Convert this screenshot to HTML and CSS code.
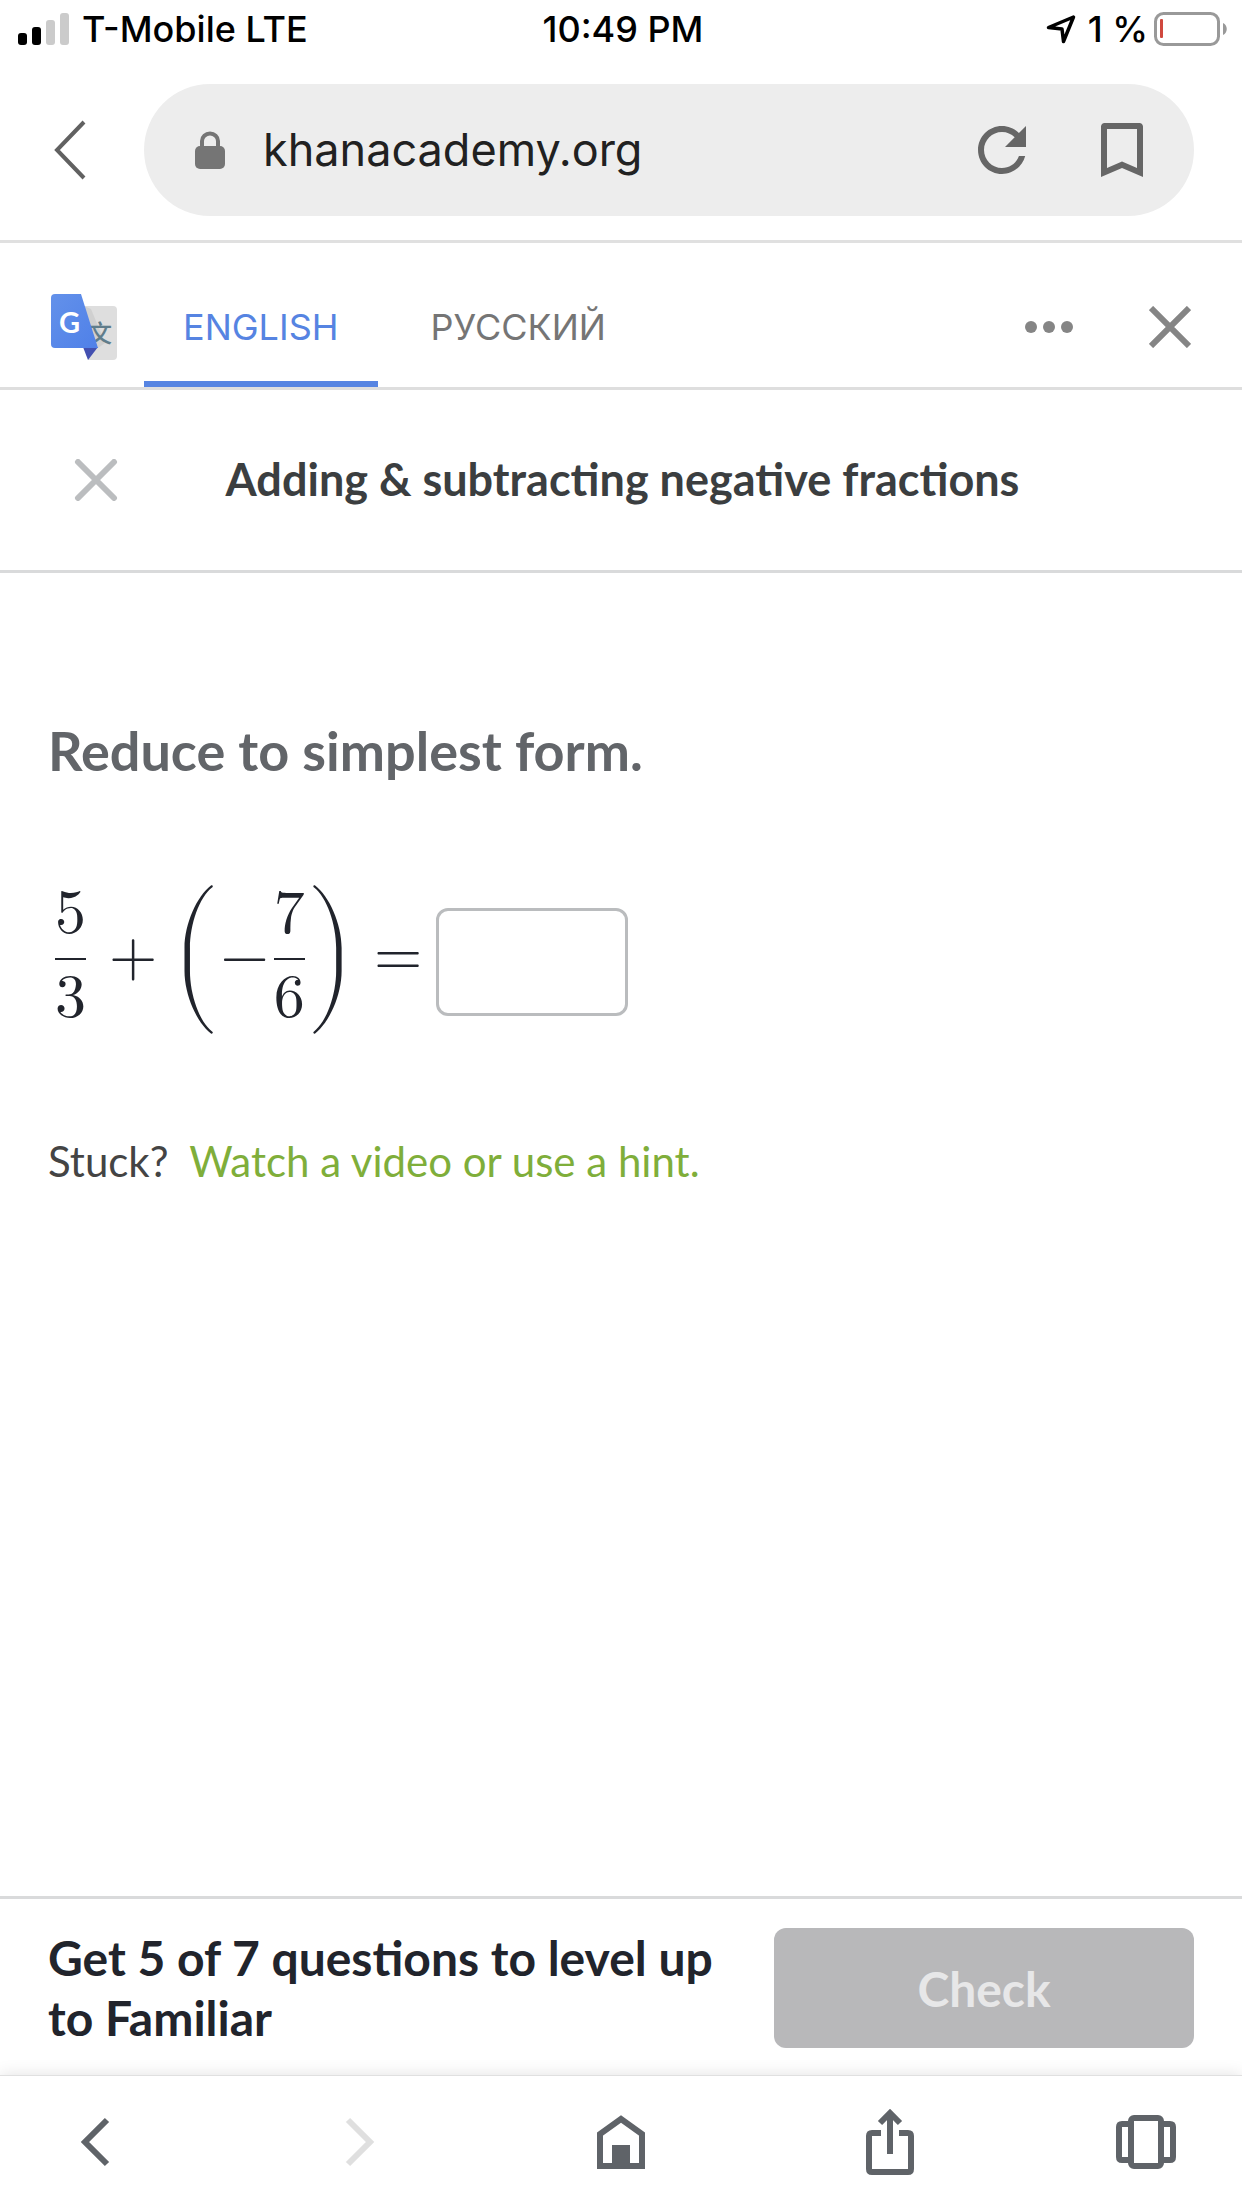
FILE: index.html
```
<!DOCTYPE html>
<html lang="en">
<head>
    <meta charset="UTF-8">
    <meta name="viewport" content="width=device-width, initial-scale=1.0">
    <title>Adding &amp; subtracting negative fractions</title>
    <link rel="stylesheet" href="styles.css">
</head>
<body>
    <div class="status-bar">
        <div class="status-left">
            <svg class="signal" width="52" height="34" viewBox="0 0 52 34">
                <rect x="0" y="21" width="9" height="12" rx="3" fill="#000"/>
                <rect x="14" y="15" width="9" height="18" rx="3" fill="#000"/>
                <rect x="28" y="8" width="9" height="25" rx="3" fill="#cbcbcb"/>
                <rect x="42" y="1" width="9" height="32" rx="3" fill="#cbcbcb"/>
            </svg>
            <span>T-Mobile LTE</span>
        </div>
        <div class="status-time">10:49 PM</div>
        <div class="status-right">
            <svg width="30" height="30" viewBox="0 0 30 30">
                <path d="M27.500 3L2.500 13.500l13.500 1.500L17.500 27.500z" fill="none" stroke="#000" stroke-width="3.500" stroke-linejoin="round"/>
            </svg>
            <span class="percent">1 %</span>
            <svg width="74" height="34" viewBox="0 0 74 34">
                <rect x="1.500" y="1.500" width="63" height="31" rx="8" fill="none" stroke="#999" stroke-width="3"/>
                <rect x="6" y="7" width="3" height="19" rx="1" fill="#d0483e"/>
                <path d="M69 11c5 2 5 10 0 12z" fill="#999"/>
            </svg>
        </div>
    </div>

    <div class="url-row">
        <button class="icon-button back" aria-label="Back">
            <svg width="34" height="60" viewBox="0 0 34 60">
                <path d="M30 2L3 30l27 28" fill="none" stroke="#616161" stroke-width="4"/>
            </svg>
        </button>
        <div class="url-bar">
            <svg width="30" height="38" viewBox="0 0 30 38">
                <rect x="0" y="15" width="30" height="23" rx="5" fill="#757575"/>
                <path d="M7 17v-7a8 7.500 0 0 1 16 0v7" fill="none" stroke="#757575" stroke-width="4"/>
            </svg>
            <input class="url" type="text" value="khanacademy.org" aria-label="Address">
            <button class="icon-button" aria-label="Reload">
                <svg width="72" height="72" viewBox="0 0 24 24" fill="#666">
                    <path d="M17.650 6.350C16.200 4.900 14.210 4 12 4c-4.420 0-7.990 3.580-7.990 8s3.570 8 7.990 8c3.730 0 6.840-2.550 7.730-6h-2.080c-.82 2.330-3.040 4-5.650 4-3.310 0-6-2.690-6-6s2.690-6 6-6c1.660 0 3.140.69 4.220 1.780L13 11h7V4l-2.350 2.350z"/>
                </svg>
            </button>
            <button class="icon-button" aria-label="Bookmark">
                <svg width="72" height="72" viewBox="0 0 24 24" fill="#666">
                    <path d="M17.800 3H6.200C5.500 3 5 3.500 5 4.200V21l7-3 7 3V4.200C19 3.500 18.500 3 17.800 3zM17 18l-5-2.180L7 18V5h10v13z"/>
                </svg>
            </button>
        </div>
    </div>

    <div class="translate-bar">
        <svg width="66" height="66" viewBox="0 0 66 66">
            <defs>
                <linearGradient id="blue" x1="0" y1="0" x2="1" y2="1">
                    <stop offset="0" stop-color="#6391ea"/>
                    <stop offset="1" stop-color="#4f80e8"/>
                </linearGradient>
            </defs>
            <path d="M30 12h32q4 0 4 4v46q0 4-4 4H37z" fill="#dedede"/>
            <path d="M33 12l7 3 14 34-7 5z" fill="#d0d0d0"/>
            <text class="logo-zh" x="37" y="48">文</text>
            <path d="M32 53h15L37 66z" fill="#4350b0"/>
            <path d="M4 0h26l17 54H4q-4 0-4-4V4q0-4 4-4z" fill="url(#blue)"/>
            <text class="logo-g" x="8" y="39">G</text>
        </svg>
        <div class="tabs">
            <button class="tab active">ENGLISH</button>
            <button class="tab">РУССКИЙ</button>
        </div>
        <button class="icon-button more" aria-label="More options">
            <svg width="48" height="12" viewBox="0 0 48 12" fill="#858585">
                <circle cx="6" cy="6" r="6"/>
                <circle cx="24" cy="6" r="6"/>
                <circle cx="42" cy="6" r="6"/>
            </svg>
        </button>
        <button class="icon-button" aria-label="Close translation">
            <svg width="42" height="42" viewBox="0 0 42 42">
                <path d="M2 2l38 38M40 2L2 40" stroke="#858585" stroke-width="6"/>
            </svg>
        </button>
    </div>

    <div class="lesson-header">
        <button class="icon-button" aria-label="Close exercise">
            <svg width="66" height="42" viewBox="0 0 66 42">
                <path d="M15 3l36 36M51 3L15 39" stroke="#bbbdbf" stroke-width="6" stroke-linecap="round"/>
            </svg>
        </button>
        <h1>Adding &amp; subtracting negative fractions</h1>
    </div>

    <main>
        <h2>Reduce to simplest form.</h2>
        <div class="equation">
            <math displaystyle="true">
                <mfrac><mn>5</mn><mn>3</mn></mfrac>
                <mo lspace="22px" rspace="9px">+</mo>
                <mrow>
                    <mo>(</mo>
                    <mo lspace="0px" rspace="4px">−</mo>
                    <mfrac><mn>7</mn><mn>6</mn></mfrac>
                    <mo>)</mo>
                </mrow>
                <mo lspace="14px" rspace="0px">=</mo>
            </math>
            <input class="answer" type="text" aria-label="Your answer">
        </div>
        <p class="stuck">Stuck? <a href="#">Watch a video or use a hint.</a></p>
    </main>

    <div class="task-bar">
        <p>Get 5 of 7 questions to level up to Familiar</p>
        <button class="check" disabled>Check</button>
    </div>

    <nav class="browser-nav">
        <button class="icon-button" aria-label="Back">
            <svg width="60" height="66" viewBox="0 0 60 66">
                <path d="M41 11L19 33l22 22" fill="none" stroke="#5f6368" stroke-width="6"/>
            </svg>
        </button>
        <button class="icon-button" aria-label="Forward" disabled>
            <svg width="60" height="66" viewBox="0 0 60 66">
                <path d="M19 11l22 22-22 22" fill="none" stroke="#dfdfdf" stroke-width="6"/>
            </svg>
        </button>
        <button class="icon-button" aria-label="Home">
            <svg width="60" height="66" viewBox="0 0 60 66">
                <path d="M9 57V25L30 10l21 15v32z" fill="none" stroke="#5f6368" stroke-width="6"/>
                <path d="M21 36h18v22H21z" fill="#5f6368"/>
            </svg>
        </button>
        <button class="icon-button" aria-label="Share">
            <svg width="60" height="66" viewBox="-9 0 60 66">
                <path d="M18 24H9q-3 0-3 3v33q0 3 3 3h36q3 0 3-3V27q0-3-3-3h-9M27 45V5M17 14L27 4l10 10" fill="none" stroke="#5f6368" stroke-width="6"/>
            </svg>
        </button>
        <button class="icon-button" aria-label="Tabs">
            <svg width="60" height="66" viewBox="0 0 60 66" fill="none" stroke="#5f6368" stroke-width="6">
                <rect x="15" y="9" width="30" height="48" rx="3"/>
                <path d="M15 15H6q-3 0-3 3v30q0 3 3 3h9M45 15h9q3 0 3 3v30q0 3-3 3h-9"/>
            </svg>
        </button>
    </nav>
</body>
</html>
```
FILE: styles.css
```
* {
    box-sizing: border-box;
}
body {
    margin: 0;
    min-height: 100vh;
    display: flex;
    flex-direction: column;
    background: #fff;
    font-family: Lato, sans-serif;
    color: #21242c;
}
svg {
    display: block;
    flex: none;
}
h1, h2, p {
    margin: 0;
}
button {
    font-family: inherit;
    border: none;
    background: none;
    padding: 0;
    cursor: pointer;
}
.icon-button {
    flex: none;
}

/* phone status bar */
.status-bar {
    display: grid;
    grid-template-columns: 1fr auto 1fr;
    align-items: center;
    height: 60px;
    padding: 0 14px 2px 18px;
    font: 500 36px/58px Inter, sans-serif;
    color: #000;
}
.status-left, .status-right {
    display: flex;
    align-items: center;
}
.status-left {
    gap: 12px;
}
.status-right {
    justify-content: flex-end;
    gap: 6px;
}
.percent {
    padding-left: 6px;
}

/* address bar */
.url-row {
    display: flex;
    align-items: center;
    gap: 56px;
    padding: 24px 48px 24px 54px;
    border-bottom: 3px solid #e0e0e0;
}
.url-bar {
    flex: 1;
    min-width: 0;
    display: flex;
    align-items: center;
    height: 132px;
    padding: 0 36px 0 51px;
    border-radius: 66px;
    background: #ededed;
}
.url {
    flex: 1;
    min-width: 0;
    margin: 0 38px;
    padding: 0;
    border: none;
    background: none;
    font: 400 45px/60px Inter, sans-serif;
    color: #212121;
}
.url-bar .icon-button + .icon-button {
    margin-left: 48px;
}

/* translate bar */
.translate-bar {
    display: flex;
    align-items: center;
    height: 147px;
    padding: 24px 51px 0;
    border-bottom: 3px solid #dedede;
}
.logo-g {
    font: 700 29px Lato, sans-serif;
    fill: #fff;
}
.logo-zh {
    font: 500 24px "Noto Sans CJK SC", sans-serif;
    fill: #607d8b;
}
.tabs {
    flex: 1;
    align-self: stretch;
    display: flex;
    gap: 14px;
    margin-left: 27px;
}
.tab {
    padding: 6px 39px 0;
    border-bottom: 6px solid transparent;
    font: 400 36px/48px Inter, sans-serif;
    color: #757575;
}
.tab.active {
    border-color: #5684e2;
    color: #5684e2;
}
.more {
    margin-right: 76px;
}

/* lesson header */
.lesson-header {
    display: flex;
    align-items: center;
    height: 183px;
    padding: 0 126px 0 63px;
    border-bottom: 3px solid #d9dadb;
}
h1 {
    flex: 1;
    padding-bottom: 3px;
    text-align: center;
    font-size: 45px;
    line-height: 60px;
    color: #3b3e40;
}

/* exercise */
main {
    flex: 1;
    padding: 142px 48px 48px;
}
h2 {
    font-size: 54px;
    line-height: 72px;
    color: #626569;
}
.equation {
    display: flex;
    align-items: center;
    gap: 14px;
    height: 156px;
    margin-top: 97px;
    padding-left: 6px;
}
.equation math {
    padding-bottom: 6px;
    font-family: "Latin Modern Math", math;
    font-size: 62px;
}
.answer {
    width: 192px;
    height: 108px;
    padding: 0 24px;
    border: 3px solid #babcbe;
    border-radius: 12px;
    font: inherit;
    font-size: 48px;
}
.stuck {
    margin-top: 91px;
    font-size: 42px;
    line-height: 60px;
    color: #444;
}
.stuck a {
    margin-left: 10px;
    color: #7fae3a;
    text-decoration: none;
}

/* progress and check button */
.task-bar {
    display: flex;
    align-items: center;
    justify-content: space-between;
    gap: 48px;
    height: 179px;
    padding: 2px 48px 0;
    border-top: 3px solid #d9dadb;
}
.task-bar p {
    flex: 1;
    font-size: 48px;
    font-weight: 700;
    line-height: 60px;
}
.check {
    width: 420px;
    height: 120px;
    border-radius: 12px;
    background: #b8b8ba;
    font-size: 48px;
    font-weight: 700;
    color: #e7e7e8;
}

/* browser navigation */
.browser-nav {
    display: flex;
    align-items: center;
    justify-content: space-between;
    height: 133px;
    padding: 0 66px;
    background: #fff;
    border-top: 1px solid #e0e0e0;
    box-shadow: 0 0 16px rgba(0, 0, 0, 0.12);
}
```
